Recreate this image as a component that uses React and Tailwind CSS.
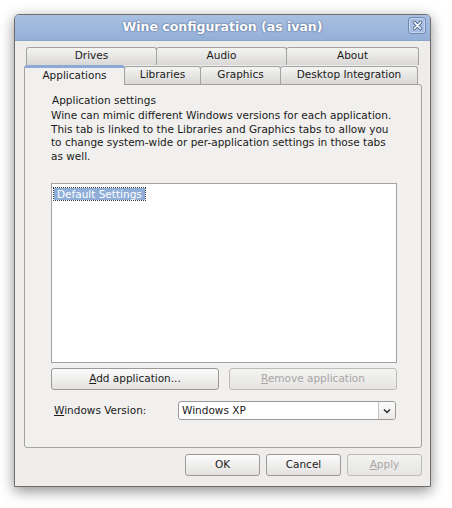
import React from 'react';

const font = { fontFamily: '"DejaVu Sans", Verdana, sans-serif' };

function Tab({ label, w, active }) {
  if (active) {
    return (
      <div
        className={`${w} h-[20px] -mb-px relative z-10 flex items-center justify-center pb-[2px] border border-b-0 border-[#a3a3a3] rounded-t-[3px] bg-[#f1f0ee] border-t-[3px] border-t-[#8eaad4] text-[10.5px] text-[#1a1a1a]`}
      >
        {label}
      </div>
    );
  }
  return (
    <div
      className={`${w} h-[18px] flex items-center justify-center pb-px border border-[#a3a3a3] border-b-0 rounded-t-[3px] bg-gradient-to-b from-[#f4f4f3] to-[#d9d8d6] text-[10.5px] text-[#1a1a1a] -ml-px first:ml-0`}
    >
      {label}
    </div>
  );
}

function Button({ children, disabled, w }) {
  return (
    <div
      className={`${w} h-[22px] flex items-center justify-center rounded-[3px] border text-[10.5px] ${
        disabled
          ? 'border-[#bdbcba] bg-gradient-to-b from-[#f3f3f2] to-[#e6e5e3] text-[#a7a6a4]'
          : 'border-[#9b9a98] bg-gradient-to-b from-[#fbfbfb] to-[#e3e2e0] text-[#1a1a1a]'
      }`}
    >
      {children}
    </div>
  );
}

export default function App() {
  return (
    <div className="w-[452px] h-[508px] bg-white pt-[14px] pl-[14px]" style={font}>
      <div className="w-[417px] h-[473px] flex flex-col bg-[#efedeb] border border-[#6e6d6b] rounded-t-[5px] shadow-[0_4px_14px_rgba(0,0,0,0.45)]">
        <div className="h-[26px] shrink-0 relative flex items-center justify-center rounded-t-[4px] bg-gradient-to-b from-[#a9c0e1] to-[#94afd8] border-b border-[#8aa3c9]">
          <span className="text-[12.5px] font-bold text-white [text-shadow:0_0_2px_rgba(40,60,100,0.9)]">
            Wine configuration (as ivan)
          </span>
          <div className="absolute right-[4px] top-[2px] w-[18px] h-[17px] rounded-[3px] border border-[#6f8ab3] bg-[#a7bee2] shadow-[inset_0_0_0_1px_rgba(255,255,255,0.35)] flex items-center justify-center">
            <svg width="11" height="11" viewBox="0 0 11 11">
              <path d="M2.5 2.5 L8.5 8.5 M8.5 2.5 L2.5 8.5" stroke="#4d6690" strokeWidth="3.2" strokeLinecap="round" />
              <path d="M2.5 2.5 L8.5 8.5 M8.5 2.5 L2.5 8.5" stroke="#ffffff" strokeWidth="1.7" strokeLinecap="round" />
            </svg>
          </div>
        </div>

        <div className="pl-[9px] pt-[6px]">
          <div className="flex ml-[2px]">
            <Tab label="Drives" w="w-[131px]" />
            <Tab label="Audio" w="w-[131px]" />
            <Tab label="About" w="w-[133px]" />
          </div>
          <div className="flex items-end">
            <Tab label="Applications" w="w-[101px]" active />
            <Tab label="Libraries" w="w-[77px]" />
            <Tab label="Graphics" w="w-[81px]" />
            <Tab label="Desktop Integration" w="w-[138px]" />
          </div>
          <div className="w-[398px] h-[364px] border border-[#a3a3a3] bg-[#f1f0ee] rounded-b-[3px] rounded-tr-[3px] pl-[26px] pr-[24px] pt-[8px] text-[10.5px] text-[#1a1a1a]">
            <div className="leading-[14px] ml-px">Application settings</div>
            <p className="mt-[2px] leading-[13.5px] whitespace-nowrap">
              Wine can mimic different Windows versions for each application.
              <br />
              This tab is linked to the Libraries and Graphics tabs to allow you
              <br />
              to change system-wide or per-application settings in those tabs
              <br />
              as well.
            </p>
            <div className="mt-[20px] h-[180px] border border-[#a3a3a3] bg-white pt-[3px] pl-[2px]">
              <span className="inline-block h-[12px] leading-[12px] px-[3px] bg-[#8eaed8] text-white outline-1 outline-dotted outline-[#3c3c3c]">
                Default Settings
              </span>
            </div>
            <div className="mt-[5px] flex justify-between">
              <Button w="w-[168px]">
                <span>
                  <span className="underline">A</span>dd application...
                </span>
              </Button>
              <Button w="w-[168px]" disabled>
                <span>
                  <span className="underline">R</span>emove application
                </span>
              </Button>
            </div>
            <div className="mt-[11px] flex items-center">
              <div className="w-[127px] pl-[3px]">
                <span className="underline">W</span>indows Version:
              </div>
              <div className="w-[218px] h-[19px] flex border border-[#9b9a98] rounded-[3px] bg-white">
                <div className="flex-1 pl-[3px] leading-[17px]">Windows XP</div>
                <div className="w-[17px] border-l border-[#c4c3c1] flex items-center justify-center bg-gradient-to-b from-[#fbfbfb] to-[#eceae8] rounded-r-[3px]">
                  <svg width="8" height="6" viewBox="0 0 8 6">
                    <path d="M1 1.5 L4 4.5 L7 1.5" stroke="#2a2a2a" strokeWidth="1.5" fill="none" />
                  </svg>
                </div>
              </div>
            </div>
          </div>
          <div className="mt-[6px] flex justify-end gap-[6px] pr-[8px]">
            <Button w="w-[75px]">OK</Button>
            <Button w="w-[75px]">Cancel</Button>
            <Button w="w-[75px]" disabled>
              <span>
                <span className="underline">A</span>pply
              </span>
            </Button>
          </div>
        </div>
      </div>
    </div>
  );
}
